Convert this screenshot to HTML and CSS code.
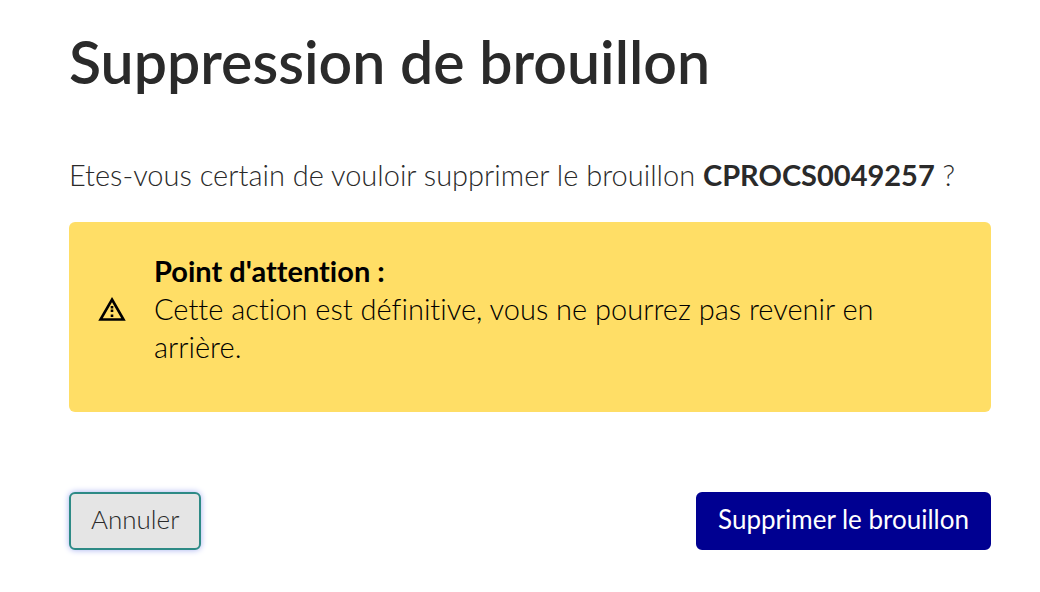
FILE: index.html
```html
<!DOCTYPE html>
<html lang="fr">
<head>
    <meta charset="UTF-8">
    <meta name="viewport" content="width=device-width, initial-scale=1.0">
    <title>Suppression de brouillon</title>
    <link rel="stylesheet" href="styles.css">
</head>
<body>
    <main class="dialog">
        <h1 class="dialog-title">Suppression de brouillon</h1>
        <p class="dialog-question">Etes-vous certain de vouloir supprimer le brouillon <strong>CPROCS0049257</strong> ?</p>

        <div class="alert" role="alert">
            <svg class="alert-icon" viewBox="0 0 28 26" aria-hidden="true">
                <path d="M14 3.5 L25.5 23.5 H2.5 Z" fill="none" stroke="currentColor" stroke-width="2.6"/>
                <path d="M14 10 V12.5 M14 13.5 V16 M14 18.5 V21" stroke="currentColor" stroke-width="2.6"/>
            </svg>
            <div class="alert-text">
                <strong class="alert-title">Point d'attention :</strong>
                <p>Cette action est définitive, vous ne pourrez pas revenir en arrière.</p>
            </div>
        </div>

        <div class="actions">
            <button type="button" class="btn btn-cancel">Annuler</button>
            <button type="button" class="btn btn-delete">Supprimer le brouillon</button>
        </div>
    </main>
</body>
</html>
```
FILE: styles.css
```css
body {
    margin: 0;
    background-color: #fff;
    color: #2a2a2a;
    font-family: Lato, sans-serif;
    font-size: 29px;
    font-weight: 300;
    font-variant-ligatures: none;
    line-height: 38px;
}
p {
    margin: 0;
}
strong {
    font-weight: 700;
}
.dialog {
    padding: 24px 49px 40px 69px;
}
.dialog-title {
    margin: 0 0 56px;
    font-size: 59px;
    font-weight: 600;
    line-height: 76px;
}
.dialog-question {
    margin-bottom: 28px;
}
.alert {
    display: flex;
    align-items: center;
    gap: 28px;
    padding: 30px 72px 46px 29px;
    border-radius: 6px;
    background-color: #ffde66;
    color: #000;
}
.alert-icon {
    flex: none;
    width: 28px;
    height: 26px;
}
.alert-title {
    display: block;
}
.actions {
    display: flex;
    justify-content: space-between;
    margin-top: 80px;
}
.btn {
    padding: 8px 20px 12px;
    border: 2px solid transparent;
    border-radius: 6px;
    font: inherit;
    font-size: 26px;
    line-height: 34px;
    cursor: pointer;
}
.btn-cancel {
    border-color: #2d8a85;
    background-color: #e5e5e5;
    color: #2a2a2a;
    box-shadow: 0 0 6px #a5b0f0;
}
.btn-delete {
    border-color: #000091;
    background-color: #000091;
    color: #fff;
    font-weight: 400;
}
```
